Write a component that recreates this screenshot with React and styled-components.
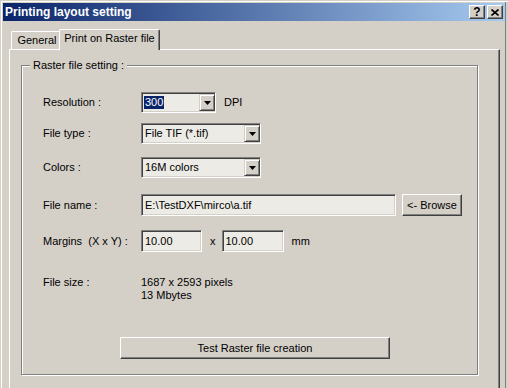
import React from 'react';
import styled, { createGlobalStyle } from 'styled-components';

const GlobalStyle = createGlobalStyle`
  html, body {
    margin: 0;
    padding: 0;
    background: #d4d0c8;
    overflow: hidden;
  }
  body {
    font-family: "Liberation Sans", Arial, sans-serif;
    font-size: 11px;
    color: #000;
  }
`;

const Window = styled.div`
  box-sizing: border-box;
  width: 508px;
  height: 388px;
  padding: 3px 3px 0 3px;
  background: #d4d0c8;
  box-shadow: inset 1px 1px 0 #d4d0c8, inset 2px 2px 0 #fff,
    inset -2px 0 0 #d4d0c8, inset -3px 0 0 #808080;
  display: flex;
  flex-direction: column;
  overflow: hidden;
`;

const TitleBar = styled.div`
  height: 18px;
  flex-shrink: 0;
  display: flex;
  align-items: center;
  padding-left: 2px;
  background: linear-gradient(to right, #0a246a, #a6caf0);
`;

const Title = styled.div`
  flex: 1;
  color: #fff;
  font-weight: bold;
  font-size: 12px;
  line-height: 14px;
`;

const CaptionButton = styled.div`
  box-sizing: border-box;
  width: 16px;
  height: 14px;
  margin-left: 2px;
  background: #d4d0c8;
  border: 1px solid;
  border-color: #fff #404040 #404040 #fff;
  box-shadow: inset -1px -1px 0 #808080;
  display: flex;
  align-items: center;
  justify-content: center;
  font-weight: bold;
  font-size: 12px;
  line-height: 12px;
  &:last-child { margin-right: 2px; }
`;

const Body = styled.div`
  flex: 1;
  min-height: 0;
  display: flex;
  flex-direction: column;
  padding: 8px 5px 0 6px;
`;

const TabStrip = styled.div`
  height: 20px;
  flex-shrink: 0;
  display: flex;
  align-items: flex-end;
  padding-left: 2px;
`;

const Tab = styled.div`
  box-sizing: border-box;
  position: relative;
  width: ${p => p.$w}px;
  height: ${p => (p.$active ? 21 : 18)}px;
  margin-left: ${p => (p.$active ? -2 : 0)}px;
  margin-bottom: ${p => (p.$active ? -1 : 0)}px;
  z-index: ${p => (p.$active ? 2 : 1)};
  background: #d4d0c8;
  border-top: 1px solid #fff;
  border-left: 1px solid #fff;
  border-right: 1px solid #404040;
  border-radius: 2px 2px 0 0;
  box-shadow: inset -1px 0 0 #808080;
  display: flex;
  align-items: center;
  justify-content: center;
  padding-bottom: ${p => (p.$active ? 3 : 0)}px;
  padding-left: ${p => (p.$active ? 0 : 2)}px;
  line-height: 13px;
`;

const Panel = styled.div`
  flex: 1;
  min-height: 0;
  border-top: 1px solid #fff;
  border-left: 1px solid #fff;
  border-right: 1px solid #404040;
  box-shadow: inset -1px 0 0 #808080;
`;

const GroupBox = styled.div`
  box-sizing: border-box;
  position: relative;
  width: 457px;
  height: 310px;
  margin: 15px 0 0 11px;
  padding-left: 21px;
  border: 1px solid #808080;
  box-shadow: inset 1px 1px 0 #fff, 1px 1px 0 #fff;
  display: flex;
  flex-direction: column;
`;

const GroupLabel = styled.div`
  position: absolute;
  top: -7px;
  left: 8px;
  padding: 0 3px;
  background: #d4d0c8;
  line-height: 13px;
`;

const Row = styled.div`
  display: flex;
  align-items: ${p => p.$align || 'center'};
  height: ${p => p.$h}px;
  margin-top: ${p => p.$mt}px;
`;

const Label = styled.div`
  width: 98px;
  flex-shrink: 0;
  line-height: 13px;
`;

const Unit = styled.div`
  margin-left: ${p => p.$ml}px;
  margin-right: ${p => p.$mr || 0}px;
  line-height: 13px;
`;

const Sunken = styled.div`
  box-sizing: border-box;
  width: ${p => p.$w}px;
  height: ${p => p.$h}px;
  background: #ecebe5;
  border: 1px solid;
  border-color: #808080 #fff #fff #808080;
  box-shadow: inset 1px 1px 0 #404040, inset -1px -1px 0 #d4d0c8;
  display: flex;
  align-items: center;
  padding: 2px 2px 2px 3px;
  line-height: 13px;
  white-space: nowrap;
  overflow: hidden;
`;

const ComboText = styled.div`
  flex: 1;
  display: flex;
  align-items: center;
`;

const Selected = styled.span`
  background: #0a246a;
  color: #fff;
  padding: 0 1px;
  margin-left: -1px;
`;

const DropButton = styled.div`
  box-sizing: border-box;
  width: 16px;
  height: 17px;
  margin: -2px -2px -2px 0;
  background: #d4d0c8;
  border: 1px solid;
  border-color: #d4d0c8 #404040 #404040 #d4d0c8;
  box-shadow: inset 1px 1px 0 #fff, inset -1px -1px 0 #808080;
  display: flex;
  align-items: center;
  justify-content: center;
`;

const Button = styled.button`
  box-sizing: border-box;
  width: ${p => p.$w}px;
  height: 22px;
  margin-left: ${p => p.$ml || 0}px;
  padding: 0;
  font: 11px "Liberation Sans", Arial, sans-serif;
  color: #000;
  background: #d4d0c8;
  border: 1px solid;
  border-color: #fff #404040 #404040 #fff;
  box-shadow: inset -1px -1px 0 #808080;
`;

const InfoText = styled.div`
  line-height: 13px;
`;

function Arrow() {
  return (
    <svg width="7" height="4" viewBox="0 0 7 4">
      <path d="M0 0h7L3.5 4z" fill="#000" />
    </svg>
  );
}

function Combo({ width, children }) {
  return (
    <Sunken $w={width} $h={21}>
      <ComboText>{children}</ComboText>
      <DropButton><Arrow /></DropButton>
    </Sunken>
  );
}

export default function App() {
  return (
    <>
      <GlobalStyle />
      <Window>
        <TitleBar>
          <Title>Printing layout setting</Title>
          <CaptionButton>?</CaptionButton>
          <CaptionButton>
            <svg width="8" height="7" viewBox="0 0 8 7">
              <path d="M0.5 0.5l7 6M7.5 0.5l-7 6" stroke="#000" strokeWidth="1.6" />
            </svg>
          </CaptionButton>
        </TitleBar>
        <Body>
          <TabStrip>
            <Tab $w={50}>General</Tab>
            <Tab $w={101} $active>Print on Raster file</Tab>
          </TabStrip>
          <Panel>
            <GroupBox>
              <GroupLabel>Raster file setting :</GroupLabel>

              <Row $mt={26} $h={21}>
                <Label>Resolution :</Label>
                <Combo width={75}><Selected>300</Selected></Combo>
                <Unit $ml={8}>DPI</Unit>
              </Row>

              <Row $mt={10} $h={21}>
                <Label>File type :</Label>
                <Combo width={120}>File TIF (*.tif)</Combo>
              </Row>

              <Row $mt={13} $h={21}>
                <Label>Colors :</Label>
                <Combo width={120}>16M colors</Combo>
              </Row>

              <Row $mt={16} $h={22}>
                <Label>File name :</Label>
                <Sunken $w={255} $h={22}>E:\TestDXF\mirco\a.tif</Sunken>
                <Button $w={60} $ml={6}>&lt;- Browse</Button>
              </Row>

              <Row $mt={14} $h={22}>
                <Label>Margins&nbsp; (X x Y) :</Label>
                <Sunken $w={61} $h={22}>10.00</Sunken>
                <Unit $ml={8} $mr={6}>x</Unit>
                <Sunken $w={62} $h={22}>10.00</Sunken>
                <Unit $ml={8}>mm</Unit>
              </Row>

              <Row $mt={24} $h={26} $align="flex-start">
                <Label>File size :</Label>
                <div>
                  <InfoText>1687 x 2593 pixels</InfoText>
                  <InfoText>13 Mbytes</InfoText>
                </div>
              </Row>

              <Row $mt={35} $h={22}>
                <Button $w={270} $ml={77}>Test Raster file creation</Button>
              </Row>
            </GroupBox>
          </Panel>
        </Body>
      </Window>
    </>
  );
}
